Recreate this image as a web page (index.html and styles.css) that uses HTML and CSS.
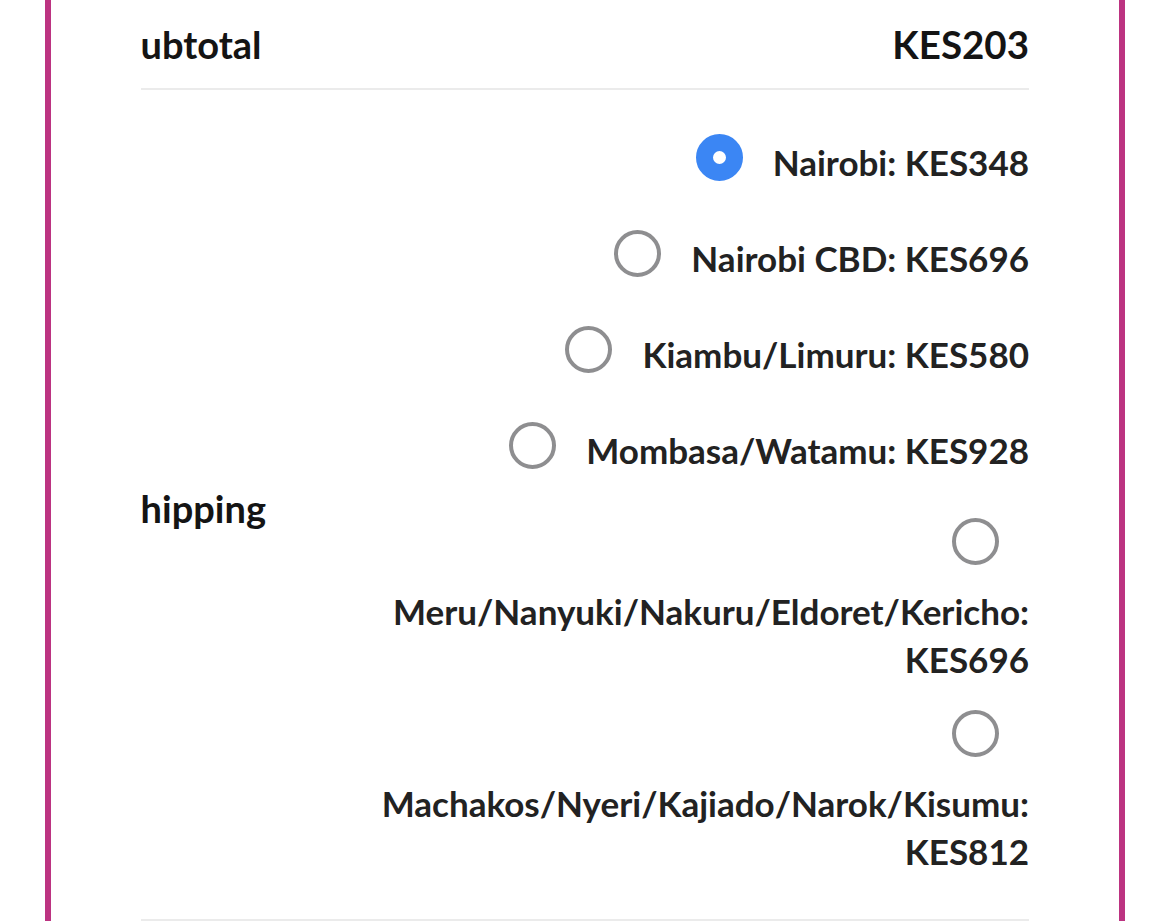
FILE: index.html
```html
<!DOCTYPE html>
<html lang="en">
<head>
    <meta charset="UTF-8">
    <meta name="viewport" content="width=device-width, initial-scale=1.0">
    <title>Cart totals</title>
    <link rel="stylesheet" href="styles.css">
</head>
<body>
    <div class="cart-box">
        <div class="totals-wrap">
            <table class="shop-table">
                <tr class="cart-subtotal">
                    <th><span class="row-title">Subtotal</span></th>
                    <td class="amount">KES203</td>
                </tr>
                <tr class="shipping">
                    <th><span class="row-title">Shipping</span></th>
                    <td>
                        <ul class="shipping-methods">
                            <li>
                                <input type="radio" name="shipping_method" id="ship-0" checked>
                                <label for="ship-0">Nairobi: KES348</label>
                            </li>
                            <li>
                                <input type="radio" name="shipping_method" id="ship-1">
                                <label for="ship-1">Nairobi CBD: KES696</label>
                            </li>
                            <li>
                                <input type="radio" name="shipping_method" id="ship-2">
                                <label for="ship-2">Kiambu/Limuru: KES580</label>
                            </li>
                            <li>
                                <input type="radio" name="shipping_method" id="ship-3">
                                <label for="ship-3">Mombasa/Watamu: KES928</label>
                            </li>
                            <li class="long">
                                <input type="radio" name="shipping_method" id="ship-4">
                                <label for="ship-4">Meru/Nanyuki/Nakuru/Eldoret/Kericho: KES696</label>
                            </li>
                            <li class="long">
                                <input type="radio" name="shipping_method" id="ship-5">
                                <label for="ship-5">Machakos/Nyeri/Kajiado/Narok/Kisumu: KES812</label>
                            </li>
                        </ul>
                    </td>
                </tr>
            </table>
        </div>
    </div>
</body>
</html>
```

FILE: styles.css
```css
body {
    margin: 0;
    background: #fff;
    font-family: Lato, "Open Sans", sans-serif;
    font-weight: 700;
    font-size: 35px;
    line-height: 48px;
    color: #222;
}
.cart-box {
    width: 1068px;
    margin: 0 auto;
    border-left: 6px solid #bc3381;
    border-right: 6px solid #bc3381;
    min-height: 921px;
}
.totals-wrap {
    margin: 0 90px;
    overflow: hidden;
}
.shop-table {
    width: 100%;
    border-collapse: collapse;
}
.shop-table th,
.shop-table td {
    padding: 0;
    border-bottom: 2px solid #ebebeb;
}
.shop-table th {
    text-align: left;
    vertical-align: middle;
    white-space: nowrap;
    font-size: 38px;
    color: #141414;
}
.row-title {
    display: block;
    text-indent: -21px;
}
.cart-subtotal th,
.cart-subtotal td {
    padding: 20px 0;
}
.amount {
    text-align: right;
    font-size: 38.5px;
    color: #141414;
}
.shipping th {
    padding-top: 7px;
}
.shipping td {
    padding: 48px 0 44px;
}
.shipping-methods {
    list-style: none;
    margin: 0;
    padding: 0;
}
.shipping-methods li {
    display: flex;
    flex-wrap: wrap;
    justify-content: flex-end;
    align-items: flex-start;
    row-gap: 22px;
    margin-bottom: 48px;
}
.shipping-methods li.long {
    margin-bottom: 31px;
}
.shipping-methods li:last-child {
    margin-bottom: 0;
}
.shipping-methods label {
    text-align: right;
}
.shipping-methods input {
    appearance: none;
    -webkit-appearance: none;
    flex: none;
    box-sizing: border-box;
    width: 47px;
    height: 47px;
    margin: -4px 30px 0 0;
    border: 4px solid #8e8e90;
    border-radius: 50%;
    background: #fff;
}
.shipping-methods input:checked {
    border: 17px solid #3b86f4;
    background: #fff;
}
```
